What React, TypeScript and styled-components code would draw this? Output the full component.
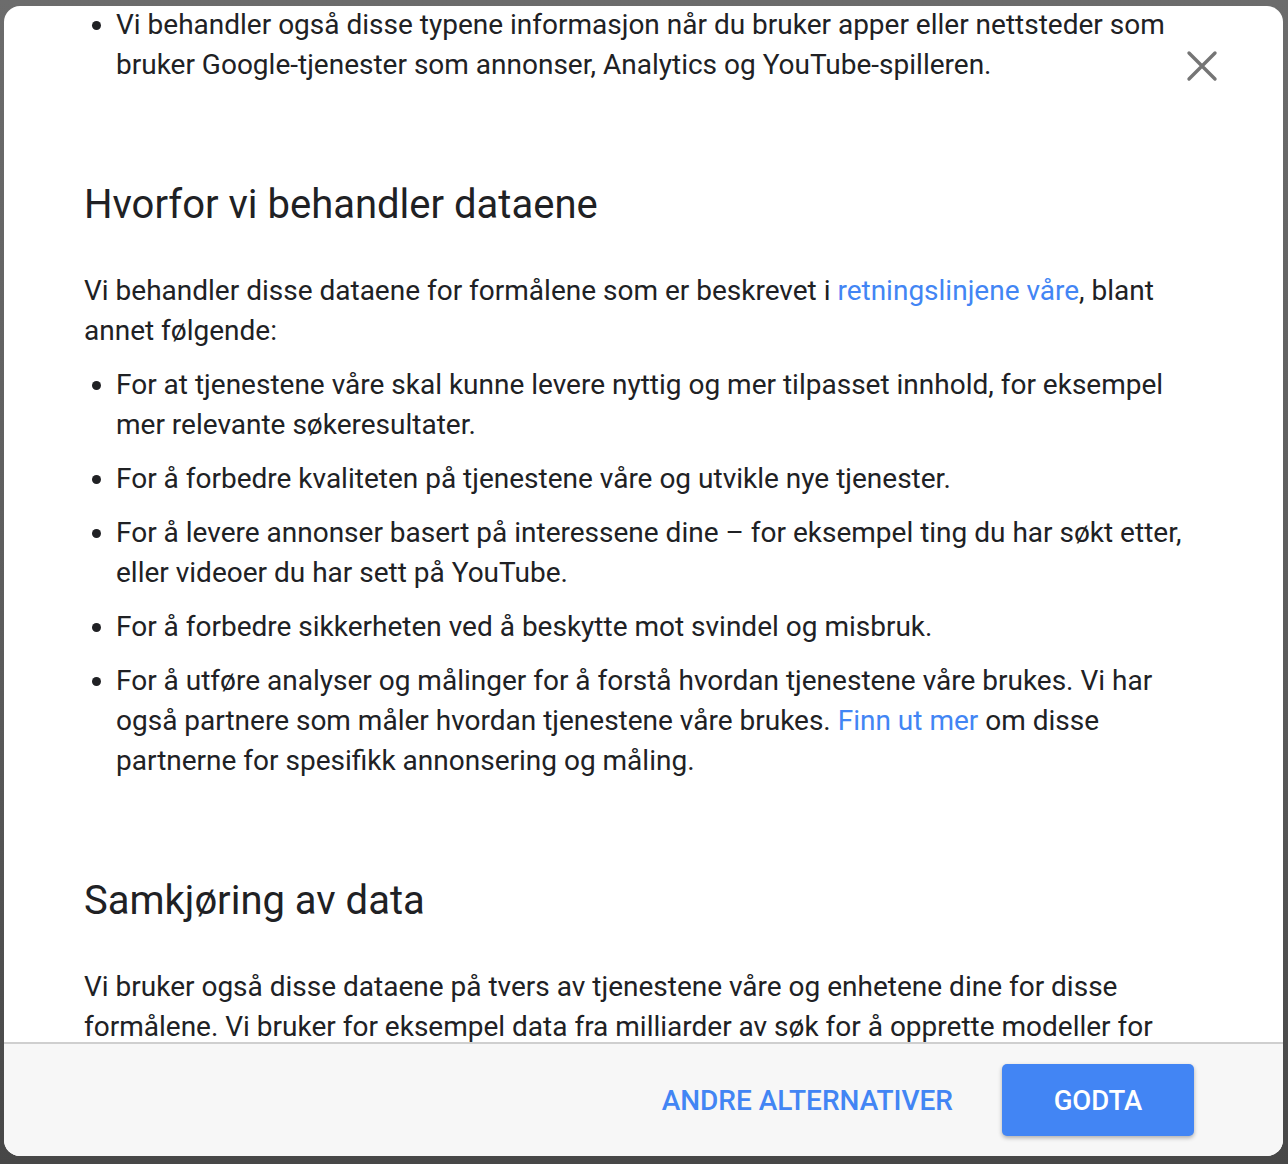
import React from 'react';
import styled, { createGlobalStyle } from 'styled-components';

const GlobalStyle = createGlobalStyle`
  html, body {
    margin: 0;
    padding: 0;
    height: 100%;
  }
  body {
    font-family: Roboto, "Noto Sans", Arial, sans-serif;
    background: linear-gradient(180deg, #6c6c6c 0%, #5a5a5a 60%, #474747 100%);
    overflow: hidden;
  }
`;

const Backdrop = styled.div`
  width: 1288px;
  height: 1164px;
  padding: 6px 5px 8px 4px;
  box-sizing: border-box;
  display: flex;
`;

const Dialog = styled.div`
  position: relative;
  flex: 1;
  background: #fff;
  border-radius: 16px;
  overflow: hidden;
  display: flex;
  flex-direction: column;
`;

const Content = styled.div`
  flex: 1;
  overflow: hidden;
  padding: 0 81px 0 80px;
  color: #202124;
  font-size: 28px;
  line-height: 40px;
`;

const CloseButton = styled.button`
  position: absolute;
  top: 32px;
  right: 53px;
  width: 56px;
  height: 56px;
  padding: 0;
  border: 0;
  background: transparent;
  display: flex;
  align-items: center;
  justify-content: center;
  cursor: pointer;
`;

const Heading = styled.h2`
  margin: 96px 0 0;
  font-size: 40px;
  line-height: 48px;
  font-weight: 400;
`;

const Paragraph = styled.p`
  margin: 42px 0 0;
`;

const List = styled.ul<{ $first?: boolean }>`
  margin: ${(p) => (p.$first ? '-1px' : '14px')} 0 0;
  padding: 0 0 0 32px;

  li + li {
    margin-top: 14px;
  }
`;

const Link = styled.a`
  color: #4285f4;
  text-decoration: none;
`;

const Footer = styled.div`
  flex: 0 0 112px;
  background: #f7f7f7;
  border-top: 2px solid #cfcfcf;
  display: flex;
  align-items: center;
  justify-content: flex-end;
  padding-right: 89px;
  gap: 49px;
`;

const TextButton = styled.button`
  border: 0;
  background: transparent;
  padding: 0;
  color: #4285f4;
  font-family: Roboto, Arial, sans-serif;
  font-size: 28px;
  font-weight: 500;
  cursor: pointer;
`;

const PrimaryButton = styled.button`
  width: 192px;
  height: 72px;
  border: 0;
  border-radius: 5px;
  background: #4285f4;
  color: #fff;
  font-family: Roboto, Arial, sans-serif;
  font-size: 27.5px;
  font-weight: 500;
  box-shadow: 0 2px 4px rgba(0, 0, 0, 0.3);
  cursor: pointer;
`;

const CloseIcon = () => (
  <svg width="32" height="32" viewBox="0 0 32 32">
    <path d="M3 3 L29 29 M29 3 L3 29" stroke="#757575" strokeWidth="3.4" strokeLinecap="round" />
  </svg>
);

export default function App() {
  return (
    <>
      <GlobalStyle />
      <Backdrop>
        <Dialog>
          <Content>
            <List $first>
              <li>
                Vi behandler også disse typene informasjon når du bruker apper eller nettsteder som
                bruker Google-tjenester som annonser, Analytics og YouTube-spilleren.
              </li>
            </List>

            <Heading>Hvorfor vi behandler dataene</Heading>
            <Paragraph>
              Vi behandler disse dataene for formålene som er beskrevet i{' '}
              <Link href="#">retningslinjene våre</Link>, blant annet følgende:
            </Paragraph>
            <List>
              <li>
                For at tjenestene våre skal kunne levere nyttig og mer tilpasset innhold, for
                eksempel mer relevante søkeresultater.
              </li>
              <li>For å forbedre kvaliteten på tjenestene våre og utvikle nye tjenester.</li>
              <li>
                For å levere annonser basert på interessene dine – for eksempel ting du har søkt
                etter, eller videoer du har sett på YouTube.
              </li>
              <li>For å forbedre sikkerheten ved å beskytte mot svindel og misbruk.</li>
              <li>
                For å utføre analyser og målinger for å forstå hvordan tjenestene våre brukes. Vi
                har også partnere som måler hvordan tjenestene våre brukes.{' '}
                <Link href="#">Finn ut mer</Link> om disse partnerne for spesifikk annonsering og
                måling.
              </li>
            </List>

            <Heading>Samkjøring av data</Heading>
            <Paragraph>
              Vi bruker også disse dataene på tvers av tjenestene våre og enhetene dine for disse
              formålene. Vi bruker for eksempel data fra milliarder av søk for å opprette modeller
              for
            </Paragraph>
          </Content>
          <CloseButton aria-label="Lukk">
            <CloseIcon />
          </CloseButton>
          <Footer>
            <TextButton>ANDRE ALTERNATIVER</TextButton>
            <PrimaryButton>GODTA</PrimaryButton>
          </Footer>
        </Dialog>
      </Backdrop>
    </>
  );
}
